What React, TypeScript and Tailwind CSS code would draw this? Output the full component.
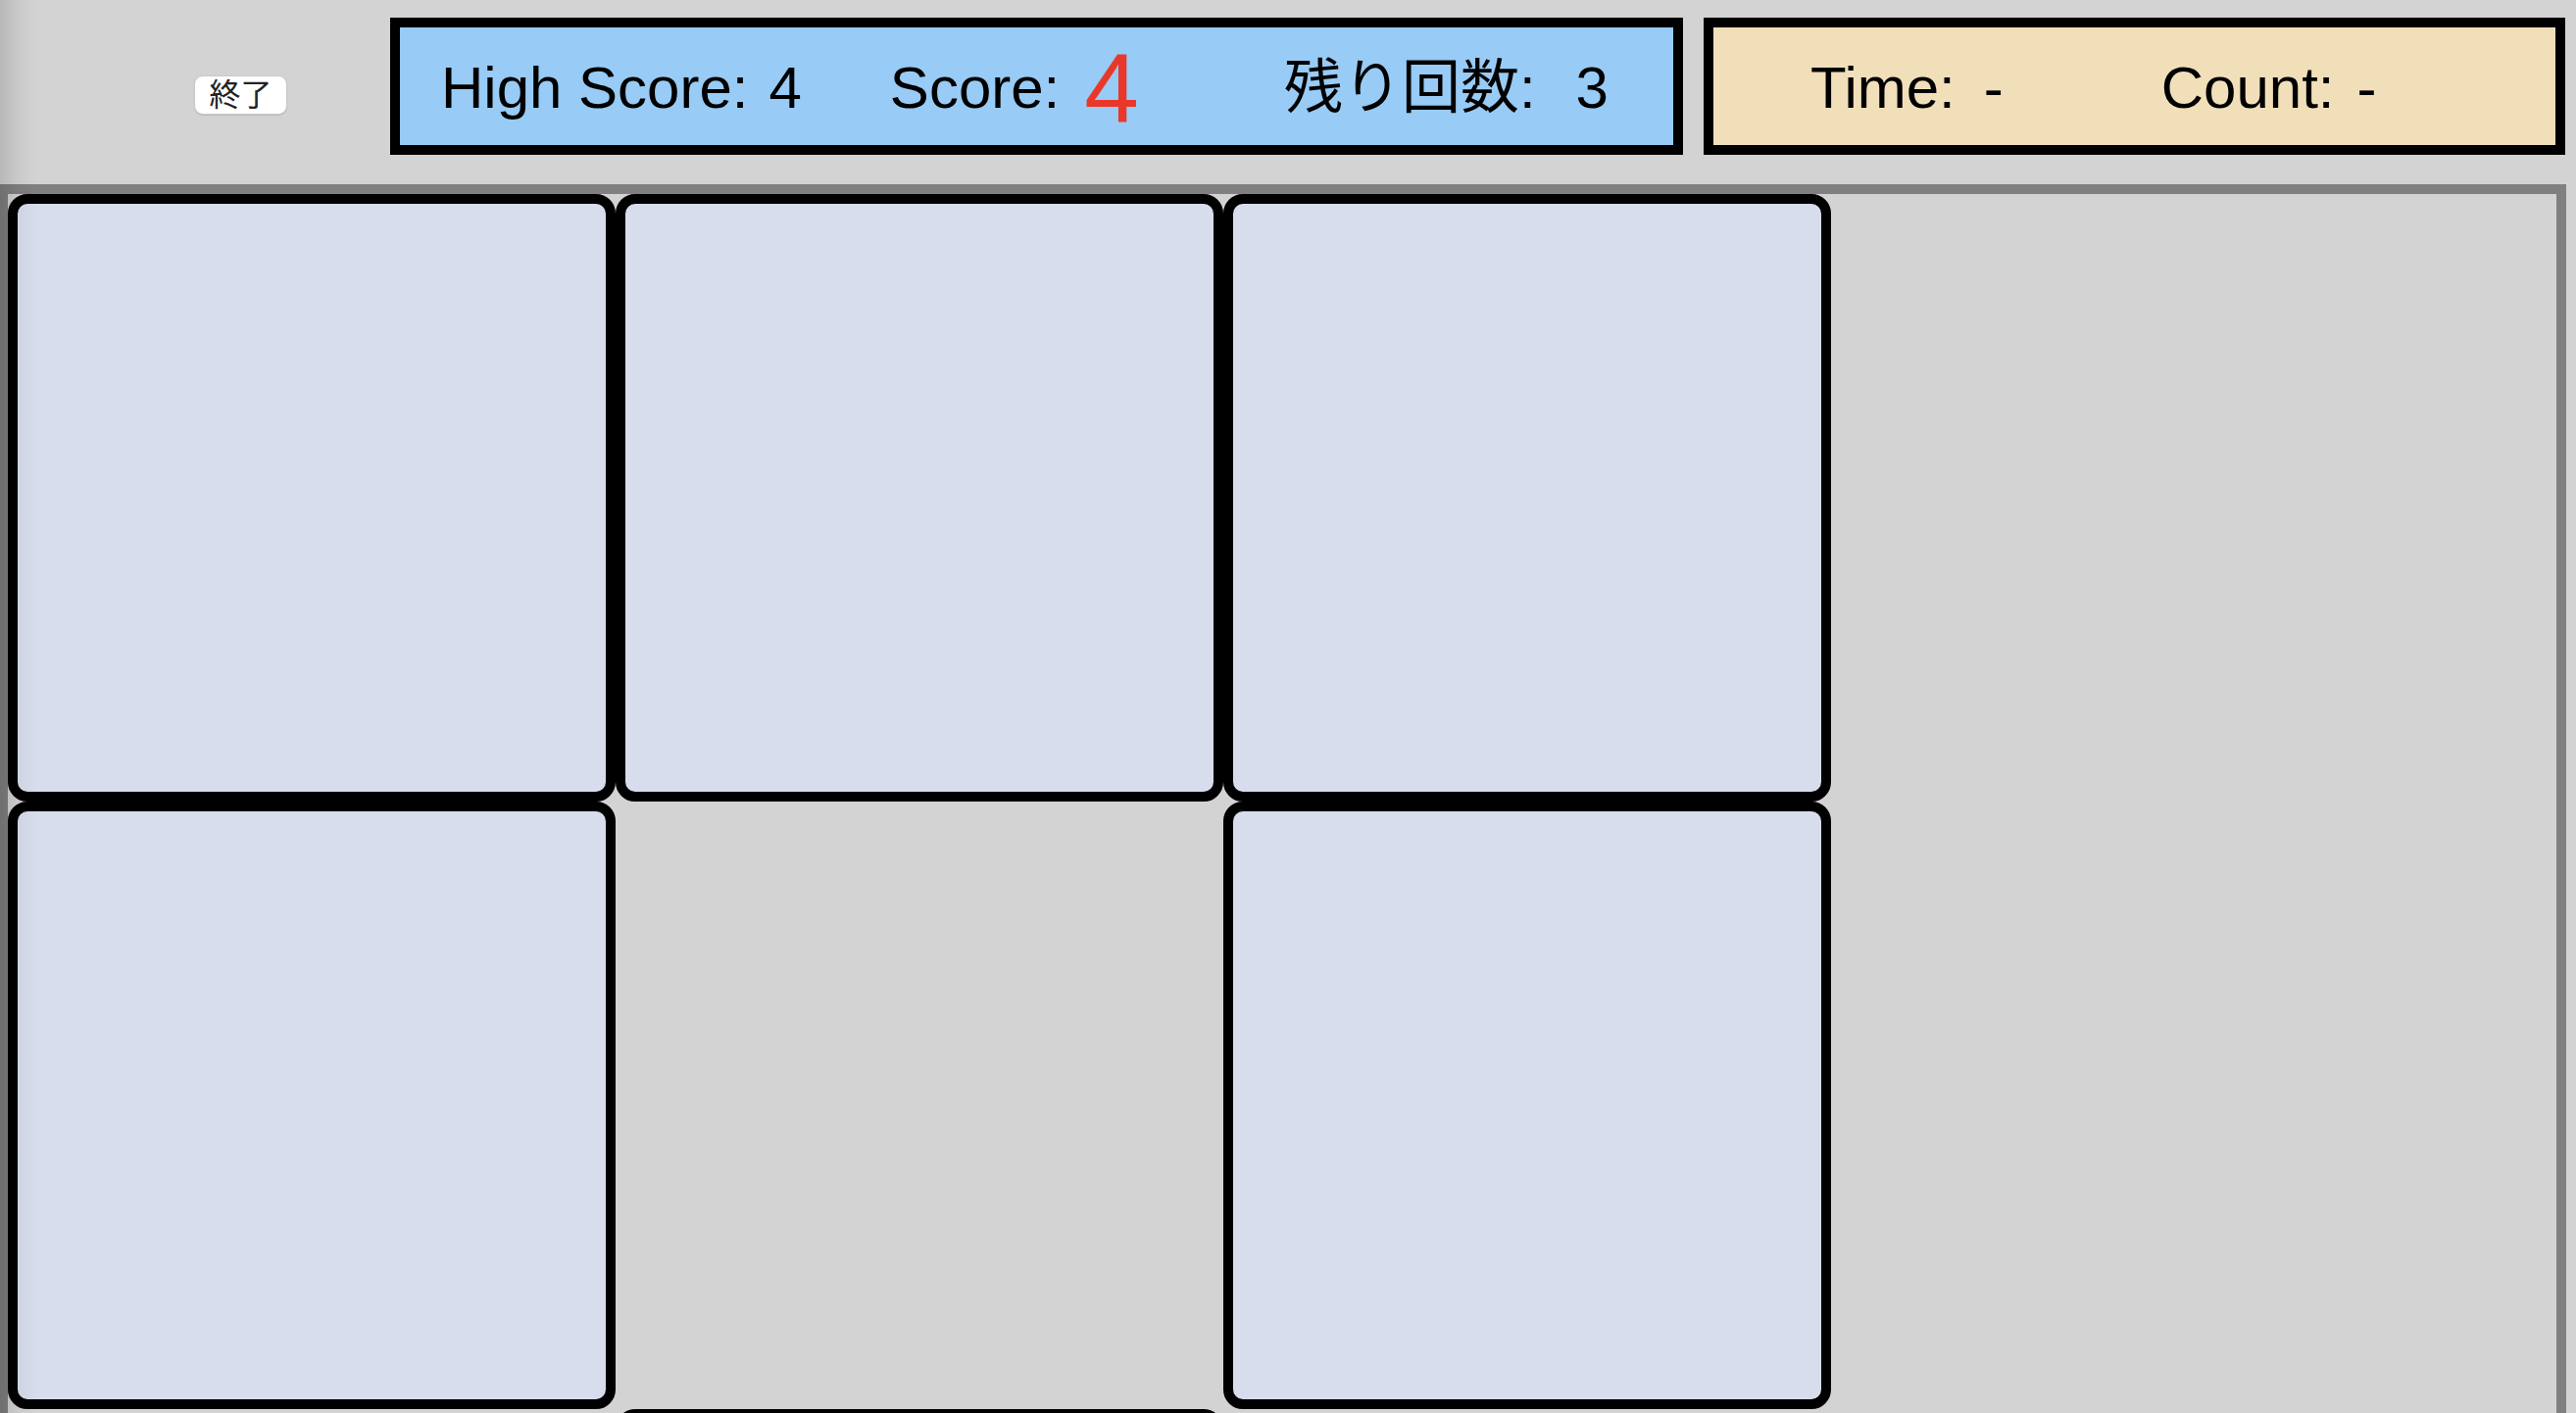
import React from "react";

const sans = { fontFamily: '"Liberation Sans", "Noto Sans CJK JP", Arial, sans-serif' };

function Card({ filled }: { filled: boolean }) {
  if (!filled) return <div />;
  return <div className="box-border h-[620px] w-[620px] rounded-[20px] border-[10px] border-black bg-[#d7ddec]" />;
}

export default function App() {
  const cells = [true, true, true, true, false, true, false, true, false];
  return (
    <div
      className="relative h-[1442px] w-[2628px] overflow-hidden bg-[#d3d3d3] text-black"
      style={sans}
    >
      <div className="flex items-start pt-[18px]">
        <div className="w-[398px] shrink-0">
          <div className="ml-[198px] mt-[59px] box-border flex h-[40px] w-[95px] items-center justify-center rounded-[9px] border border-[#c9c9c9] bg-white pb-[1px] leading-none text-[#222] shadow-[0_1px_1px_rgba(0,0,0,0.12)]">
            <span className="text-[32px] leading-none">終了</span>
          </div>
        </div>
        <div className="box-border flex h-[140px] w-[1319px] shrink-0 items-center border-[10px] border-black bg-[#98cbf5] pl-[42px] pt-[4px] text-[60px] leading-none">
          <span>High Score:</span>
          <span className="ml-[21px]">4</span>
          <span className="ml-[90px]">Score:</span>
          <span className="ml-[25px] text-[100px] leading-none text-[#e9382a]">4</span>
          <span className="ml-[148px]">残り回数:</span>
          <span className="ml-[41px]">3</span>
        </div>
        <div className="ml-[21px] box-border flex h-[140px] w-[879px] shrink-0 items-center border-[10px] border-black bg-[#f1dfba] pl-[99px] pt-[4px] text-[60px] leading-none">
          <span>Time:</span>
          <span className="ml-[29px]">-</span>
          <span className="ml-[161px]">Count:</span>
          <span className="ml-[23px]">-</span>
        </div>
      </div>
      <div className="ml-[-2px] mt-[30px] box-border h-[1300px] w-[2620px] border-[10px] border-b-0 border-[#808080]">
        <div className="grid grid-cols-[repeat(3,620px)] grid-rows-[repeat(3,620px)]">
          {cells.map((f, i) => (
            <Card key={i} filled={f} />
          ))}
        </div>
      </div>
      <div className="pointer-events-none absolute inset-y-0 left-0 w-[38px] bg-gradient-to-r from-black/[0.13] via-black/[0.04] to-transparent" />
    </div>
  );
}
